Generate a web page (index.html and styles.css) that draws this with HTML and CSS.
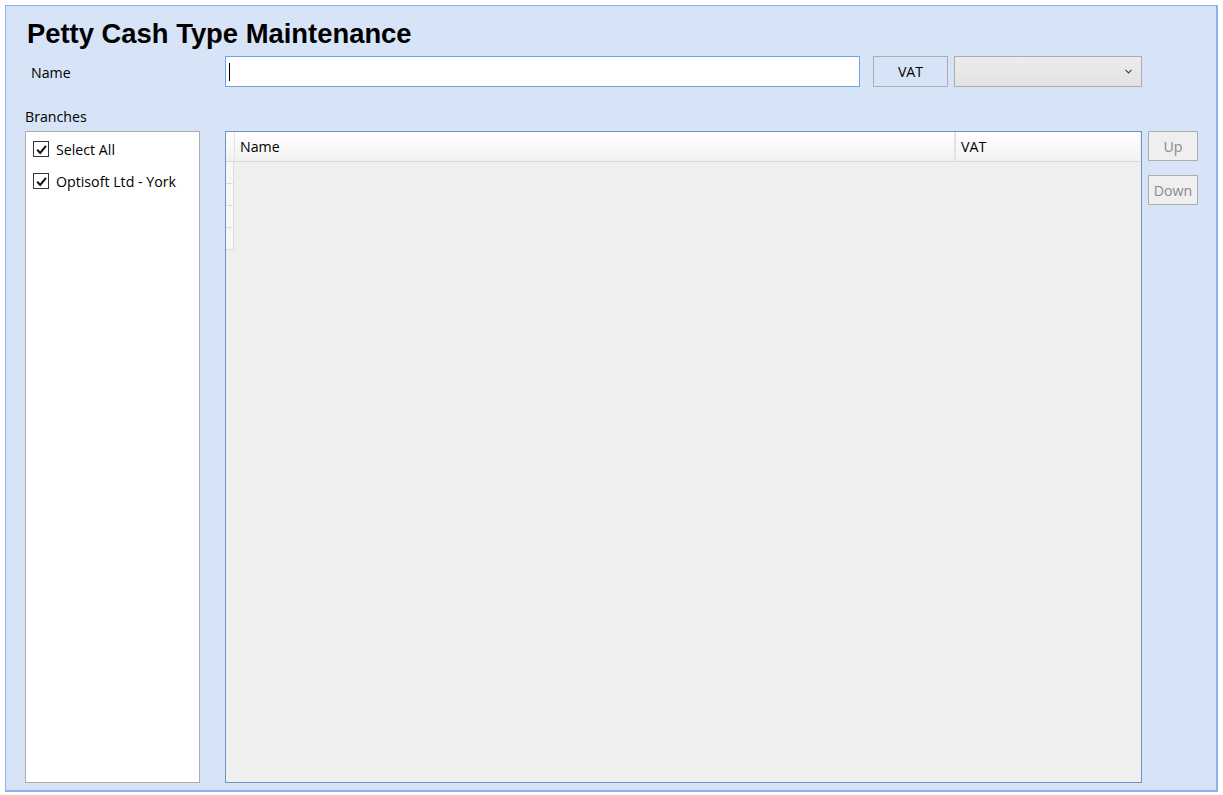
FILE: index.html
```html
<!DOCTYPE html>
<html>
<head>
<meta charset="utf-8">
<link rel="stylesheet" href="styles.css">
</head>
<body>
<div class="frame">
  <h1 class="title">Petty Cash Type Maintenance</h1>
  <div class="name-row">
    <label class="name-label">Name</label>
    <div class="name-input"><span class="caret"></span></div>
    <button class="vat-btn">VAT</button>
    <div class="combo">
      <svg class="chev" width="7" height="5" viewBox="0 0 7 5"><path d="M0.5 0.8 L3.5 3.8 L6.5 0.8" fill="none" stroke="#444" stroke-width="1.2"/></svg>
    </div>
  </div>
  <div class="branches-label">Branches</div>
  <div class="main">
    <div class="branch-list">
      <div class="check-item">
        <span class="checkbox"><svg width="13" height="13" viewBox="0 0 13 13"><path d="M2.2 6.8 L5.2 10 L11 2.8" fill="none" stroke="#111" stroke-width="2"/></svg></span>
        <span>Select All</span>
      </div>
      <div class="check-item">
        <span class="checkbox"><svg width="13" height="13" viewBox="0 0 13 13"><path d="M2.2 6.8 L5.2 10 L11 2.8" fill="none" stroke="#111" stroke-width="2"/></svg></span>
        <span>Optisoft Ltd - York</span>
      </div>
    </div>
    <div class="grid">
      <div class="grid-head">
        <div class="corner"></div>
        <div class="col col-name">Name</div>
        <div class="col col-vat">VAT</div>
      </div>
      <div class="row-heads">
        <div class="rh"></div>
        <div class="rh"></div>
        <div class="rh"></div>
        <div class="rh"></div>
      </div>
    </div>
    <div class="side-buttons">
      <button class="side-btn">Up</button>
      <button class="side-btn">Down</button>
    </div>
  </div>
</div>
</body>
</html>
```
FILE: styles.css
```css
html, body {
  margin: 0;
  padding: 0;
  background: #ffffff;
}
body {
  font-family: "Open Sans", "Noto Sans", sans-serif;
  font-size: 14.2px;
  color: #000;
}
.frame {
  box-sizing: border-box;
  margin: 5px 0 0 5px;
  width: 1213px;
  height: 787px;
  background: #d7e4f7;
  border: 1px solid #8fb0ee;
  border-right: 2px solid #8fb0ee;
  border-bottom: 2px solid #8fb0ee;
  padding: 0 18px 0 19px;
  display: flex;
  flex-direction: column;
}
.title {
  margin: 13px 0 0 2px;
  font-family: "Liberation Sans", Arial, sans-serif;
  font-weight: bold;
  font-size: 27.4px;
  line-height: 30px;
  height: 30px;
}
.name-row {
  margin-top: 7px;
  display: flex;
  align-items: center;
  height: 31px;
}
.name-label {
  width: 200px;
  padding-left: 6px;
  box-sizing: border-box;
  padding-top: 1px;
}
.name-input {
  box-sizing: border-box;
  width: 635px;
  height: 31px;
  background: #fff;
  border: 1px solid #6fa2e6;
  display: flex;
  align-items: center;
  padding-left: 3px;
}
.caret {
  width: 1px;
  height: 18px;
  background: #000;
}
.vat-btn {
  box-sizing: border-box;
  margin-left: 13px;
  width: 75px;
  height: 31px;
  background: #d7e4f7;
  border: 1px solid #adadad;
  font-family: "Open Sans", "Noto Sans", sans-serif;
  font-size: 14.2px;
  color: #000;
  padding: 0;
}
.combo {
  box-sizing: border-box;
  margin-left: 6px;
  width: 188px;
  height: 31px;
  background: linear-gradient(#ececec, #e2e2e2);
  border: 1px solid #acacac;
  display: flex;
  align-items: center;
  justify-content: flex-end;
  padding-right: 9px;
}
.branches-label {
  margin-top: 20px;
  height: 20px;
  line-height: 20px;
}
.main {
  margin-top: 4px;
  display: flex;
  align-items: flex-start;
  height: 652px;
}
.branch-list {
  box-sizing: border-box;
  width: 175px;
  height: 652px;
  background: #fff;
  border: 1px solid #acacac;
  padding: 1px 0 0 7px;
}
.check-item {
  display: flex;
  align-items: center;
  height: 32px;
}
.checkbox {
  box-sizing: border-box;
  width: 16px;
  height: 16px;
  border: 1px solid #333;
  background: #fff;
  display: flex;
  align-items: center;
  justify-content: center;
  margin-right: 7px;
}
.grid {
  box-sizing: border-box;
  margin-left: 25px;
  width: 917px;
  height: 652px;
  background: #efefef;
  border: 1px solid #7092c2;
}
.grid-head {
  display: flex;
  height: 29px;
  background: linear-gradient(#ffffff, #f1f1f1);
  border-bottom: 1px solid #d8d8d8;
  margin-right: 1px;
}
.corner {
  width: 8px;
  border-right: 1px solid #e4e4e4;
}
.col {
  box-sizing: border-box;
  line-height: 29px;
  padding-left: 5px;
}
.col-name {
  width: 721px;
  border-right: 2px solid #e2e2e2;
}
.col-vat {
  flex: 1;
  padding-left: 5px;
}
.row-heads {
  width: 8px;
}
.rh {
  height: 21px;
  background: #f7f7f7;
  border-bottom: 1px solid #dcdcdc;
  border-right: 1px solid #dcdcdc;
}
.side-buttons {
  margin-left: 6px;
  display: flex;
  flex-direction: column;
  gap: 14px;
}
.side-btn {
  box-sizing: border-box;
  width: 50px;
  height: 30px;
  background: #efefef;
  border: 1px solid #adadad;
  color: #8a8a8a;
  font-family: "Open Sans", "Noto Sans", sans-serif;
  font-size: 14.2px;
  padding: 0;
}
```
